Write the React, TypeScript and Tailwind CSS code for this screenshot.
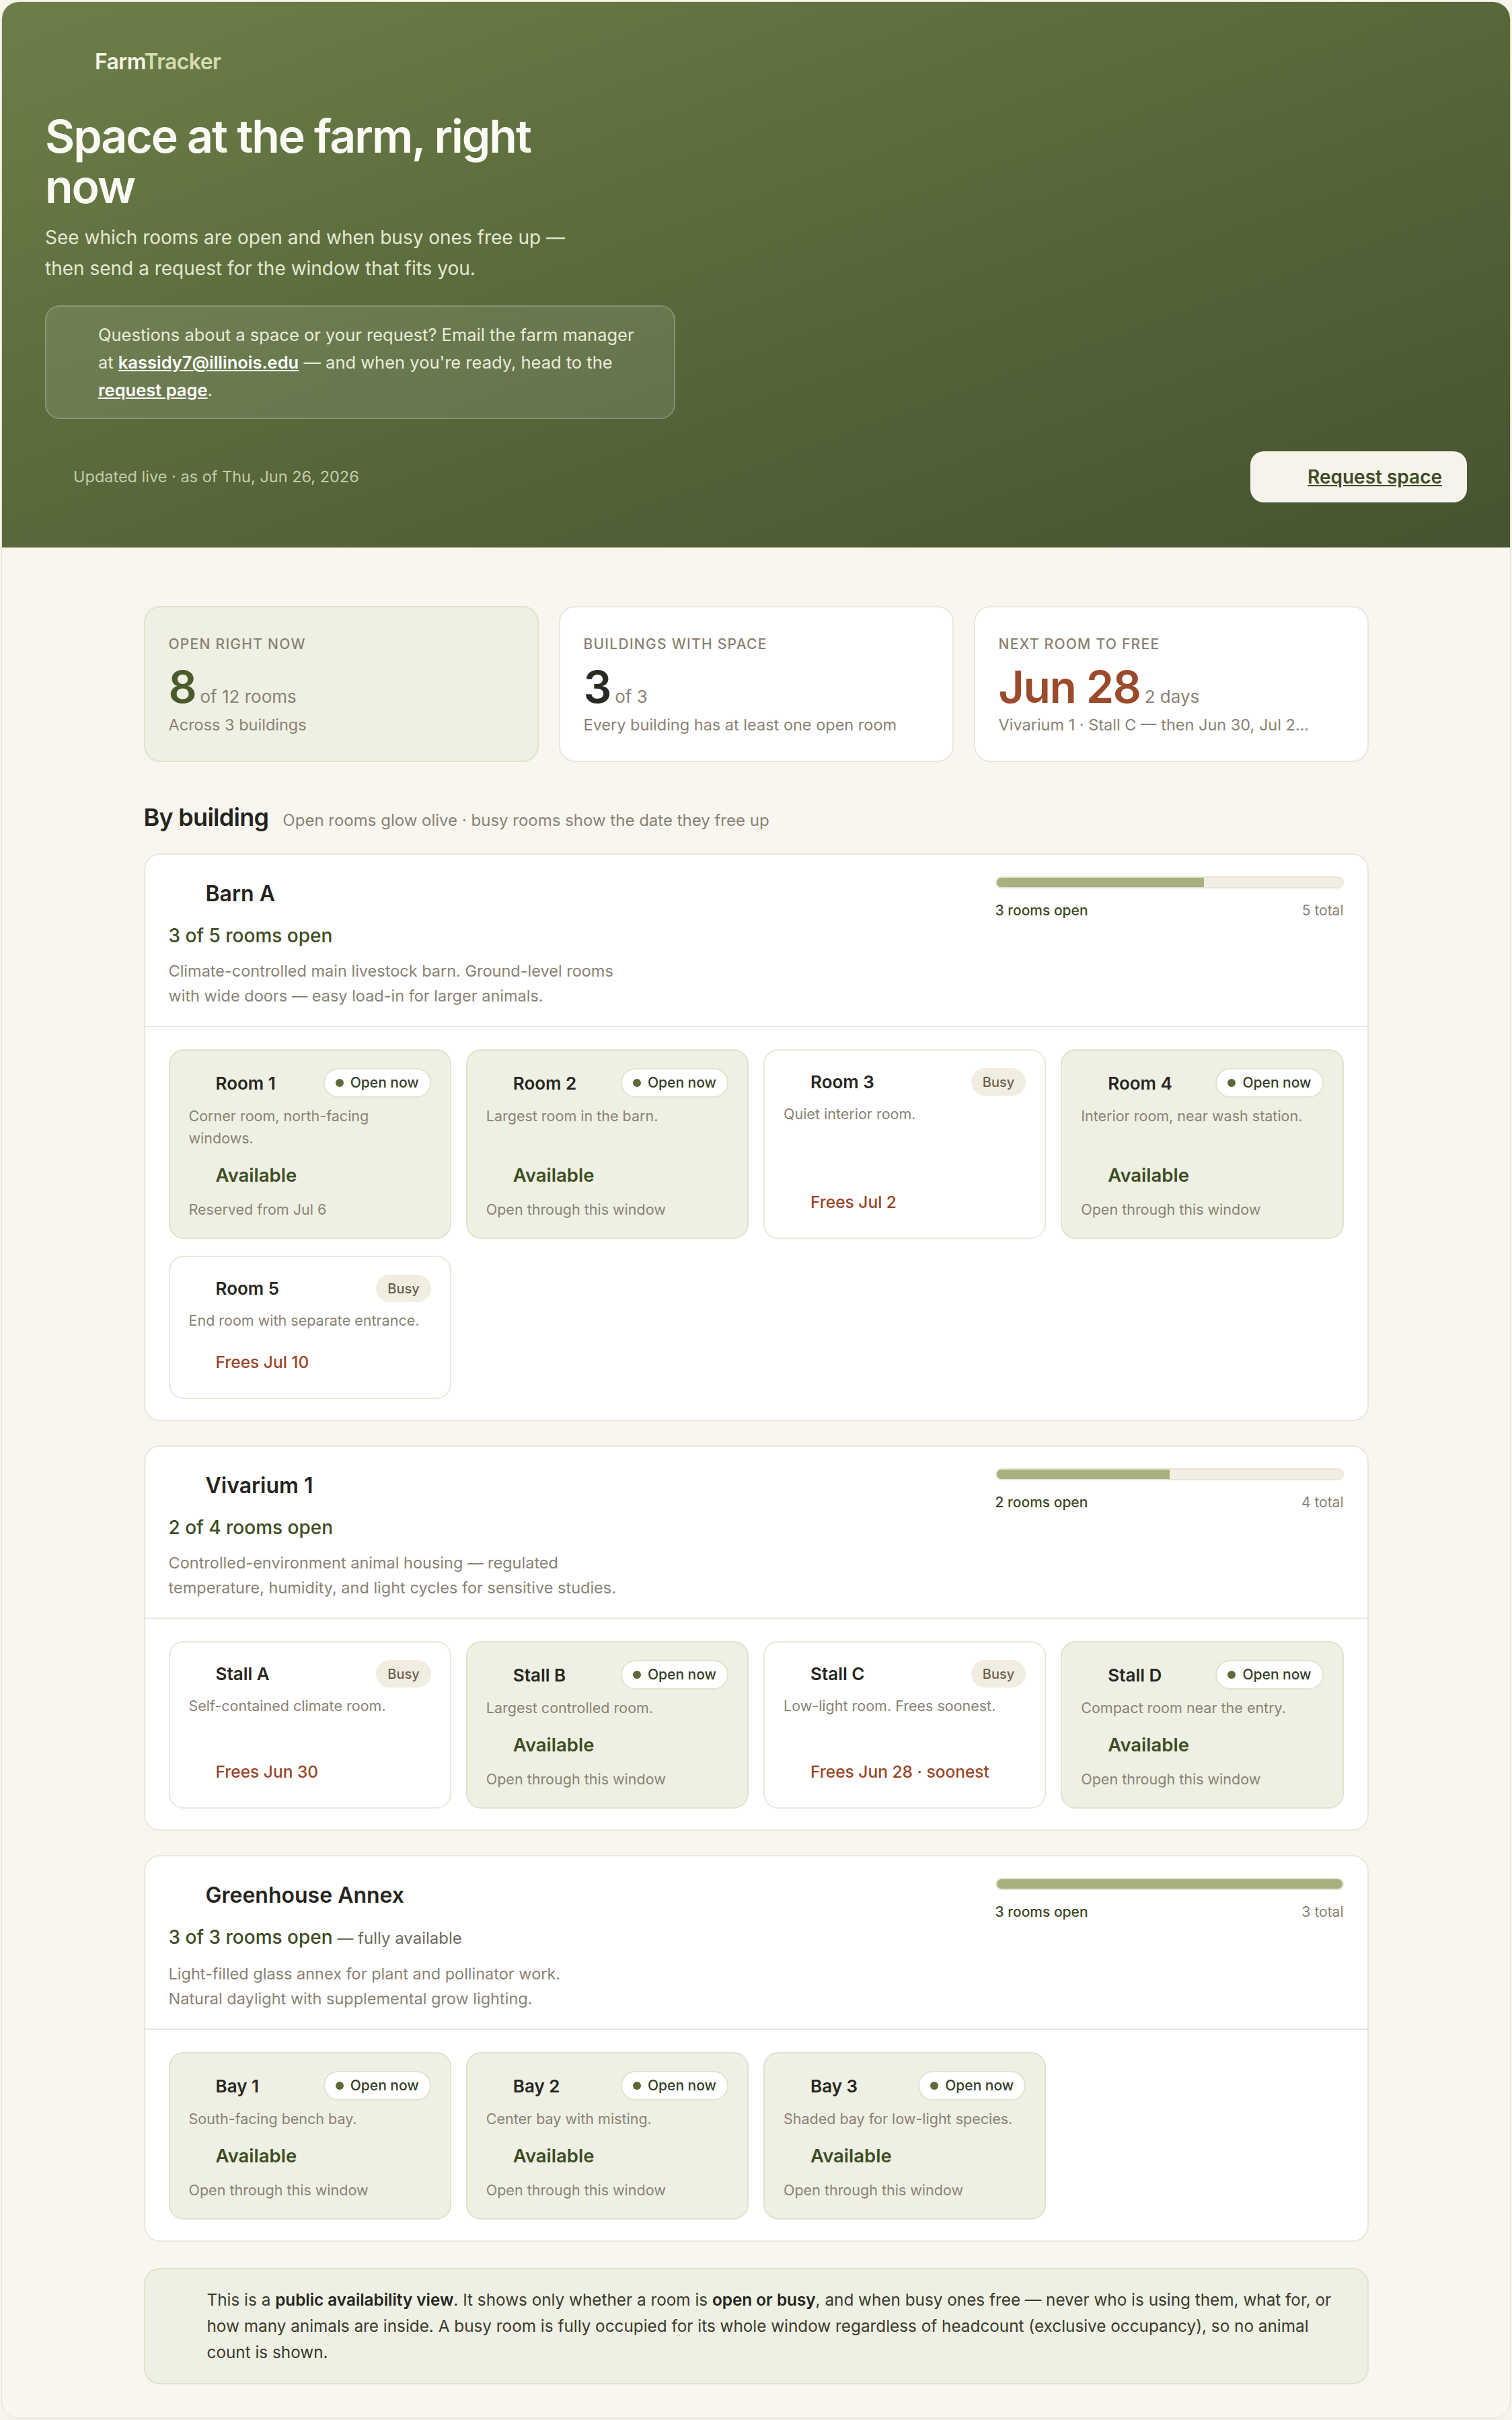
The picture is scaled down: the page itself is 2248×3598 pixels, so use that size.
import clsx from 'clsx'

type Room = {
    name: string
    open: boolean
    desc: string
    note: string
}

type Building = {
    name: string
    desc: string
    rooms: Room[]
}

const buildings: Building[] = [
    {
        name: 'Barn A',
        desc: 'Climate-controlled main livestock barn. Ground-level rooms with wide doors — easy load-in for larger animals.',
        rooms: [
            { name: 'Room 1', open: true, desc: 'Corner room, north-facing windows.', note: 'Reserved from Jul 6' },
            { name: 'Room 2', open: true, desc: 'Largest room in the barn.', note: 'Open through this window' },
            { name: 'Room 3', open: false, desc: 'Quiet interior room.', note: 'Frees Jul 2' },
            { name: 'Room 4', open: true, desc: 'Interior room, near wash station.', note: 'Open through this window' },
            { name: 'Room 5', open: false, desc: 'End room with separate entrance.', note: 'Frees Jul 10' },
        ],
    },
    {
        name: 'Vivarium 1',
        desc: 'Controlled-environment animal housing — regulated temperature, humidity, and light cycles for sensitive studies.',
        rooms: [
            { name: 'Stall A', open: false, desc: 'Self-contained climate room.', note: 'Frees Jun 30' },
            { name: 'Stall B', open: true, desc: 'Largest controlled room.', note: 'Open through this window' },
            { name: 'Stall C', open: false, desc: 'Low-light room. Frees soonest.', note: 'Frees Jun 28 · soonest' },
            { name: 'Stall D', open: true, desc: 'Compact room near the entry.', note: 'Open through this window' },
        ],
    },
    {
        name: 'Greenhouse Annex',
        desc: 'Light-filled glass annex for plant and pollinator work. Natural daylight with supplemental grow lighting.',
        rooms: [
            { name: 'Bay 1', open: true, desc: 'South-facing bench bay.', note: 'Open through this window' },
            { name: 'Bay 2', open: true, desc: 'Center bay with misting.', note: 'Open through this window' },
            { name: 'Bay 3', open: true, desc: 'Shaded bay for low-light species.', note: 'Open through this window' },
        ],
    },
]

function RoomCard({ room }: { room: Room }) {
    return (
        <div
            className={clsx(
                'flex flex-col rounded-[22px] border-2 px-[28px] pt-[26px] pb-[25px]',
                room.open ? 'border-[#dfe3cb] bg-[#eef0e3]' : 'border-[#ece7dc] bg-white'
            )}
        >
            <div className="flex items-center justify-between">
                <span className="pl-[40px] text-[26px] font-semibold text-[#27261f]">{room.name}</span>
                {room.open ? (
                    <span className="flex h-[44px] items-center gap-[10px] rounded-full border-2 border-[#e0e4cd] bg-white px-[16px] text-[21px] font-medium text-[#33402a]">
                        <span className="h-[12px] w-[12px] rounded-full bg-[#5b6b38]" />
                        Open now
                    </span>
                ) : (
                    <span className="flex h-[41px] items-center rounded-full bg-[#f2ede1] px-[17px] text-[20px] font-medium text-[#6b5f4e]">
                        Busy
                    </span>
                )}
            </div>
            <p className="mt-[11px] text-[21.5px] leading-[33px] text-[#8a8273]">{room.desc}</p>
            {room.open ? (
                <div className="mt-auto pt-[21px]">
                    <div className="pl-[40px] text-[27.5px] leading-[34px] font-semibold text-[#3d4d24]">Available</div>
                    <div className="mt-[18px] text-[21.5px] leading-[33px] text-[#8a8273]">{room.note}</div>
                </div>
            ) : (
                <div className="mt-auto pt-[29px] pb-[11px] pl-[40px] text-[24.5px] leading-[33px] font-medium text-[#9a4527]">
                    {room.note}
                </div>
            )}
        </div>
    )
}

function BuildingCard({ b }: { b: Building }) {
    const open = b.rooms.filter((r) => r.open).length
    const total = b.rooms.length
    const full = open === total

    return (
        <section className="rounded-[24px] border-2 border-[#ece7dc] bg-white">
            <div className="flex justify-between px-[35px] pt-[35px] pb-[26px]">
                <div>
                    <div className="flex h-[46px] items-center pl-[55px] text-[32px] font-semibold text-[#25241d]">{b.name}</div>
                    <div className="mt-[21px] text-[28px] leading-[36px] font-medium text-[#3d4d24]">
                        {open} of {total} rooms open
                        {full && <span className="text-[24px] font-normal text-[#6f6a5c]"> — fully available</span>}
                    </div>
                    <p className="mt-[16px] max-w-[666px] text-[23.5px] leading-[37px] text-[#8a8273]">{b.desc}</p>
                </div>
                <div className="-mt-[3px] w-[518px] shrink-0">
                    <div className="h-[18px] overflow-hidden rounded-full border-2 border-[#e8e3d5] bg-[#f2eee2]">
                        <div className="h-full bg-[#a6b17d]" style={{ width: `${(open / total) * 100}%` }} />
                    </div>
                    <div className="mt-[19px] flex justify-between text-[21px] leading-[28px]">
                        <span className="font-medium text-[#3b4a25]">{open} rooms open</span>
                        <span className="text-[#8a8273]">{total} total</span>
                    </div>
                </div>
            </div>
            <div className="grid grid-cols-4 gap-x-[22px] gap-y-[25px] border-t-2 border-[#ece7dc] px-[35px] pt-[33px] pb-[31px]">
                {b.rooms.map((r) => (
                    <RoomCard key={r.name} room={r} />
                ))}
            </div>
        </section>
    )
}

function StatCard({
    label,
    value,
    unit,
    sub,
    tone,
}: {
    label: string
    value: string
    unit: string
    sub: string
    tone: 'olive' | 'dark' | 'rust'
}) {
    return (
        <div
            className={clsx(
                'h-[232px] rounded-[24px] border-2 px-[35px] pt-[40px]',
                tone === 'olive' ? 'border-[#dfe3cb] bg-[#eef0e3]' : 'border-[#ece7dc] bg-white'
            )}
        >
            <div className="text-[21px] leading-[30px] font-medium tracking-[0.06em] text-[#8a8070] uppercase">{label}</div>
            <div className="mt-[15px] flex items-baseline gap-[6px]">
                <span
                    className={clsx(
                        'text-[66px] leading-[66px] font-semibold tracking-[-0.02em]',
                        tone === 'olive' && 'text-[#4a5a2c]',
                        tone === 'dark' && 'text-[#2b2a22]',
                        tone === 'rust' && 'text-[#9b4a2b]'
                    )}
                >
                    {value}
                </span>
                <span className="text-[26px] text-[#8a8273]">{unit}</span>
            </div>
            <div className="mt-[7px] truncate text-[23.5px] leading-[32px] text-[#8a8273]">{sub}</div>
        </div>
    )
}

export default function App() {
    return (
        <div className="min-h-screen bg-[#f7f4ec] p-[2px] [font-family:Inter,'Noto_Sans',sans-serif]">
            <div className="overflow-hidden rounded-[26px] border border-[#e7e1d2] bg-[#f9f6ef]">
                <header className="bg-linear-to-br from-[#6d7f48] via-[#57683a] to-[#465330] px-[64px] pt-[69px] pb-[67px]">
                    <div className="pl-[74px] text-[32px] leading-[40px] font-semibold tracking-[-0.02em]">
                        <span className="text-[#f7f4ea]">Farm</span>
                        <span className="text-[#d5dcb0]">Tracker</span>
                    </div>
                    <h1 className="mt-[53px] max-w-[820px] text-[68px] leading-[75px] font-semibold tracking-[-0.03em] text-[#fbfaf4]">
                        Space at the farm, right now
                    </h1>
                    <p className="mt-[15px] max-w-[820px] text-[28px] leading-[46px] text-[#e4e8d4]">
                        See which rooms are open and when busy ones free up — then send a request for the window that fits you.
                    </p>
                    <div className="mt-[32px] w-[937px] rounded-[22px] border-2 border-white/20 bg-white/10 py-[21px] pr-[52px] pl-[77px] text-[25.5px] leading-[41px] text-[#e9ecda]">
                        Questions about a space or your request? Email the farm manager at{' '}
                        <a href="#" className="font-semibold text-white underline">
                            kassidy7@illinois.edu
                        </a>{' '}
                        — and when you're ready, head to the{' '}
                        <a href="#" className="font-semibold text-white underline">
                            request page
                        </a>
                        .
                    </div>
                    <div className="mt-[48px] flex items-center justify-between">
                        <span className="pl-[42px] text-[23.5px] text-[#c6cbab]">Updated live · as of Thu, Jun 26, 2026</span>
                        <a
                            href="#"
                            className="flex h-[76px] w-[322px] items-center rounded-[20px] bg-[#f6f3ea] pl-[85px] text-[28px] font-semibold text-[#3e4c27] underline"
                        >
                            Request space
                        </a>
                    </div>
                </header>

                <main className="mx-auto w-[1821px] pt-[87px] pb-[50px]">
                    <div className="grid grid-cols-3 gap-[30px]">
                        <StatCard label="Open right now" value="8" unit="of 12 rooms" sub="Across 3 buildings" tone="olive" />
                        <StatCard label="Buildings with space" value="3" unit="of 3" sub="Every building has at least one open room" tone="dark" />
                        <StatCard
                            label="Next room to free"
                            value="Jun 28"
                            unit="2 days"
                            sub="Vivarium 1 · Stall C — then Jun 30, Jul 2…"
                            tone="rust"
                        />
                    </div>

                    <div className="mt-[60px] mb-[31px] flex items-baseline gap-[21px]">
                        <h2 className="text-[36px] leading-[44px] font-semibold tracking-[-0.02em] text-[#25241d]">By building</h2>
                        <span className="text-[24px] text-[#8a8273]">Open rooms glow olive · busy rooms show the date they free up</span>
                    </div>

                    <div className="flex flex-col gap-[36px]">
                        {buildings.map((b) => (
                            <BuildingCard key={b.name} b={b} />
                        ))}
                    </div>

                    <div className="mt-[39px] rounded-[24px] border-2 border-[#dfe3cb] bg-[#eef0e3] py-[26px] pr-[40px] pl-[92px] text-[24.3px] leading-[39px] text-[#3a3a2c]">
                        This is a <strong className="font-semibold text-[#25241d]">public availability view</strong>. It shows only whether a room is{' '}
                        <strong className="font-semibold text-[#25241d]">open or busy</strong>, and when busy ones free — never who is using them, what for, or
                        how many animals are inside. A busy room is fully occupied for its whole window regardless of headcount (exclusive occupancy), so no
                        animal count is shown.
                    </div>
                </main>
            </div>
        </div>
    )
}
